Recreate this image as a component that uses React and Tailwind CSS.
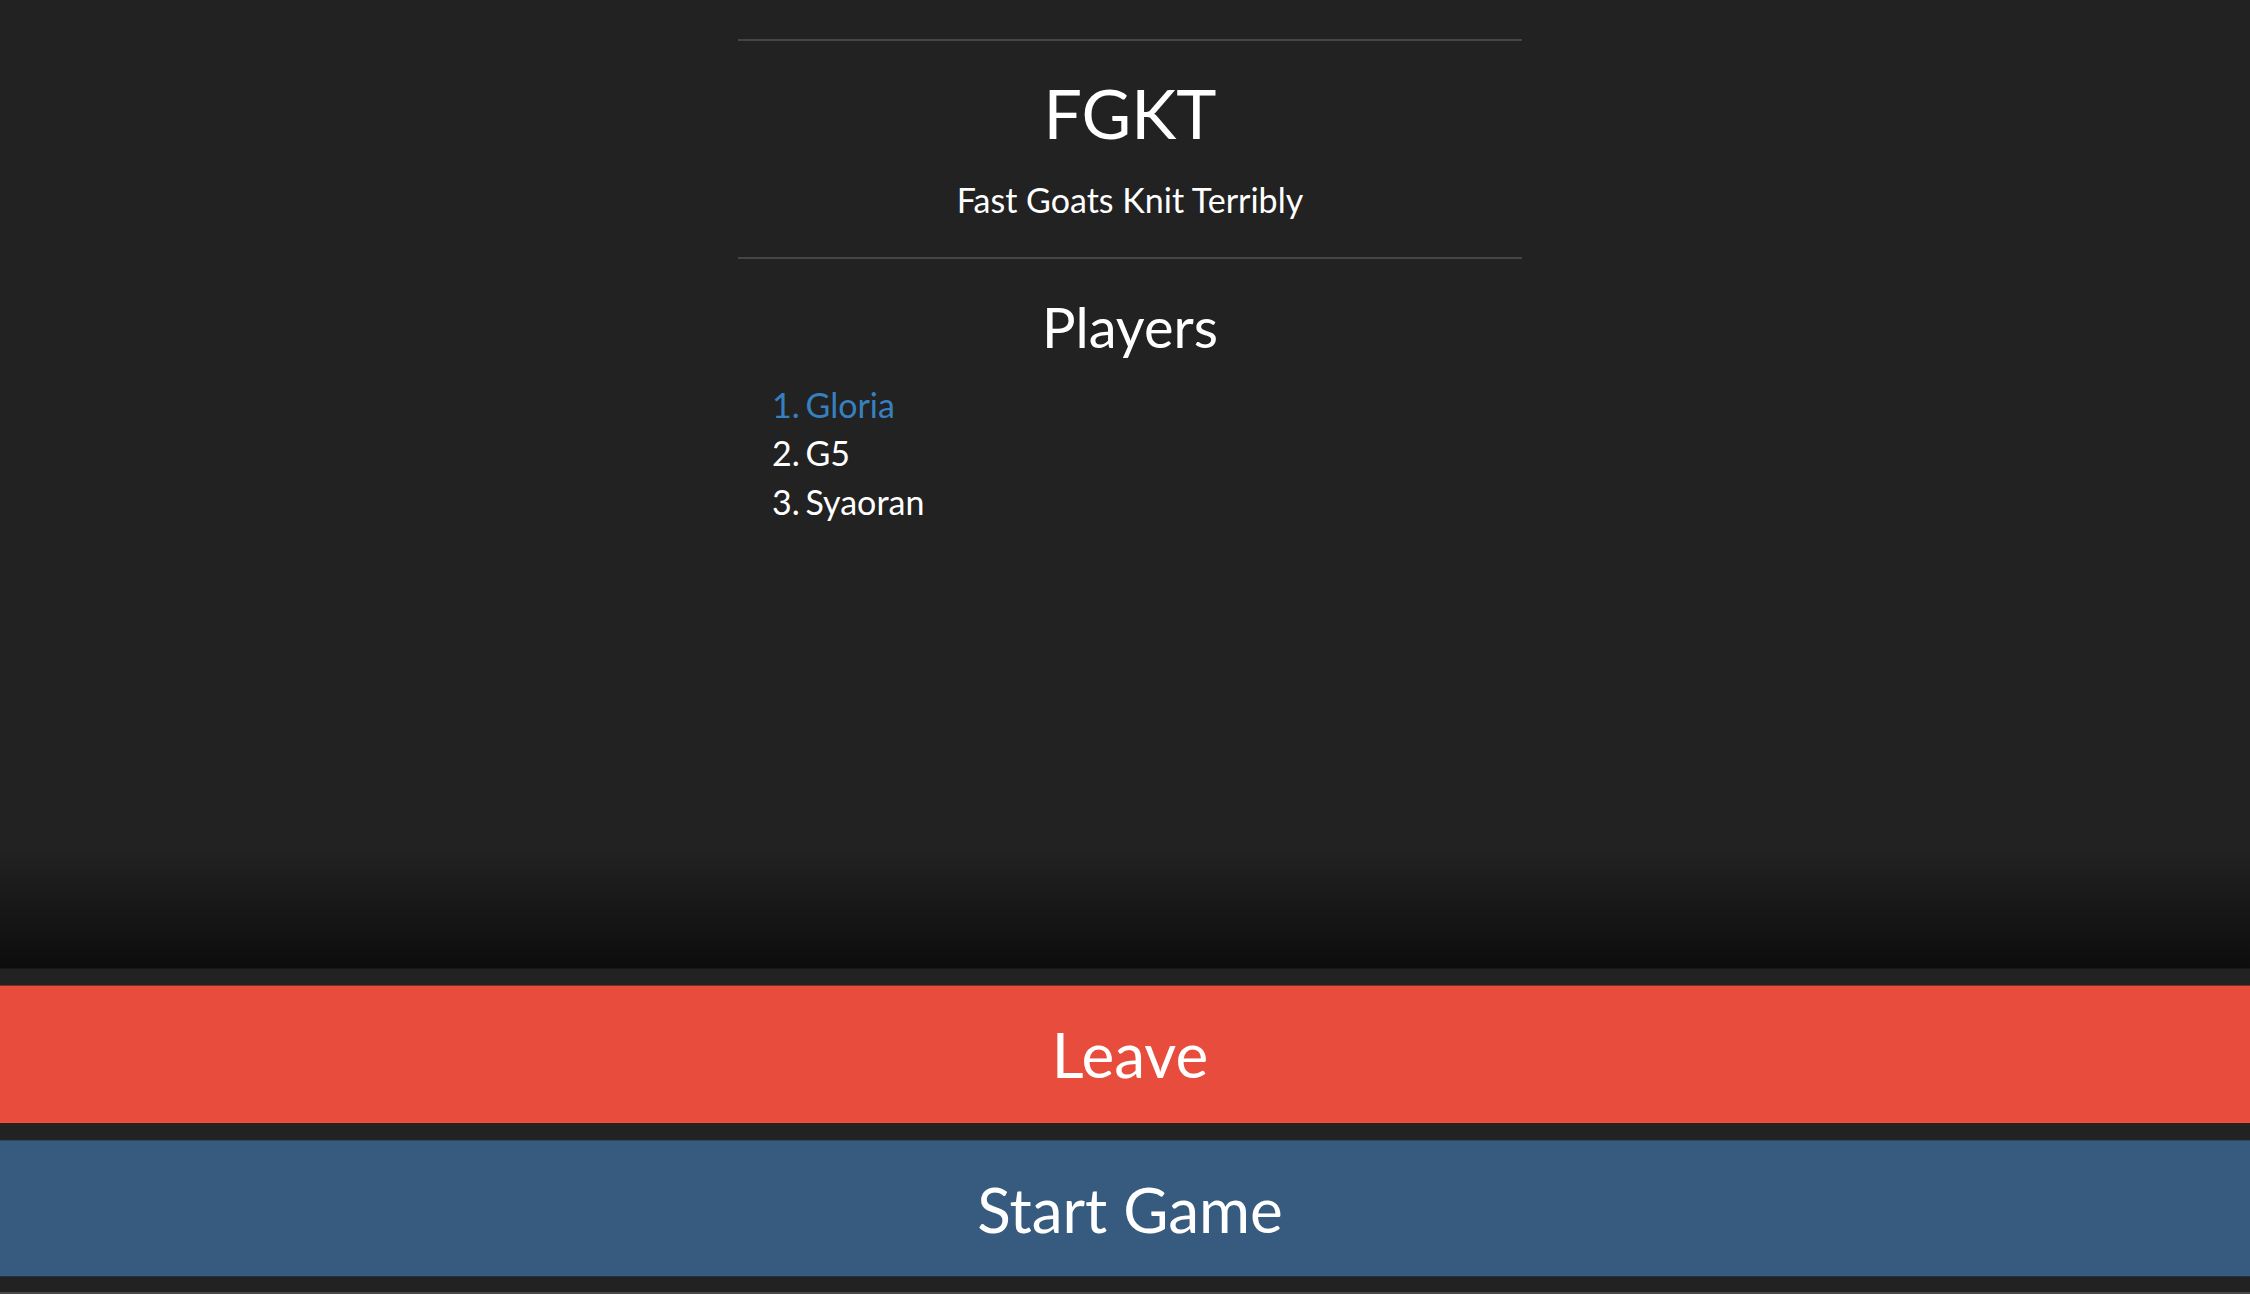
import React from "react";

const players = ["Gloria", "G5", "Syaoran"];

const App = () => {
  return (
    <div className="h-[1294px] flex flex-col bg-[#222222] text-white overflow-hidden" style={{ fontFamily: "Lato, 'Open Sans', sans-serif" }}>
      {/* LOBBY INFO */}
      <div className="flex-1 flex justify-center pl-[10px] pt-[39px]">
        <div className="w-[784px]">
          <div className="border-t-2 border-[#464545]" />
          <div className="text-center pt-[31px] pb-[33px]">
            <h1 className="text-[68px] leading-[1.2]">FGKT</h1>
            <p className="text-[34px] leading-[48px] mt-[22px]">Fast Goats Knit Terribly</p>
          </div>
          <div className="border-t-2 border-[#464545]" />
          <h2 className="text-center text-[56px] leading-[1.2] mt-[34px]">Players</h2>
          <ol className="mt-[21px] pl-[34px] text-[34px] leading-[48.5px] [word-spacing:-3px]">
            {players.map((name, i) => (
              <li key={name} className={i === 0 ? "text-[#3780bf]" : "text-white"}>
                {i + 1}. {name}
              </li>
            ))}
          </ol>
        </div>
      </div>

      {/* FADE */}
      <div className="h-[120px] bg-gradient-to-b from-[#222222] to-[#0d0d0d] border-b border-[#191919]" />

      {/* ACTIONS */}
      <div className="pt-[16px] pb-[15px] flex flex-col gap-[17px]">
        <button className="h-[138px] w-full flex items-center justify-center pl-[10px] bg-[#e74c3c] border-t border-[#7a2f27] border-b border-b-[#f5503e] text-[62px] leading-none">
          Leave
        </button>
        <button className="h-[137px] w-full flex items-center justify-center pl-[10px] bg-[#375a7f] border-t border-[#2c4766] border-b border-b-[#1e3149] text-[62px] leading-none">
          Start Game
        </button>
      </div>
      <div className="h-[2px] bg-[#4a4a4a]" />
    </div>
  );
};

export default App;
